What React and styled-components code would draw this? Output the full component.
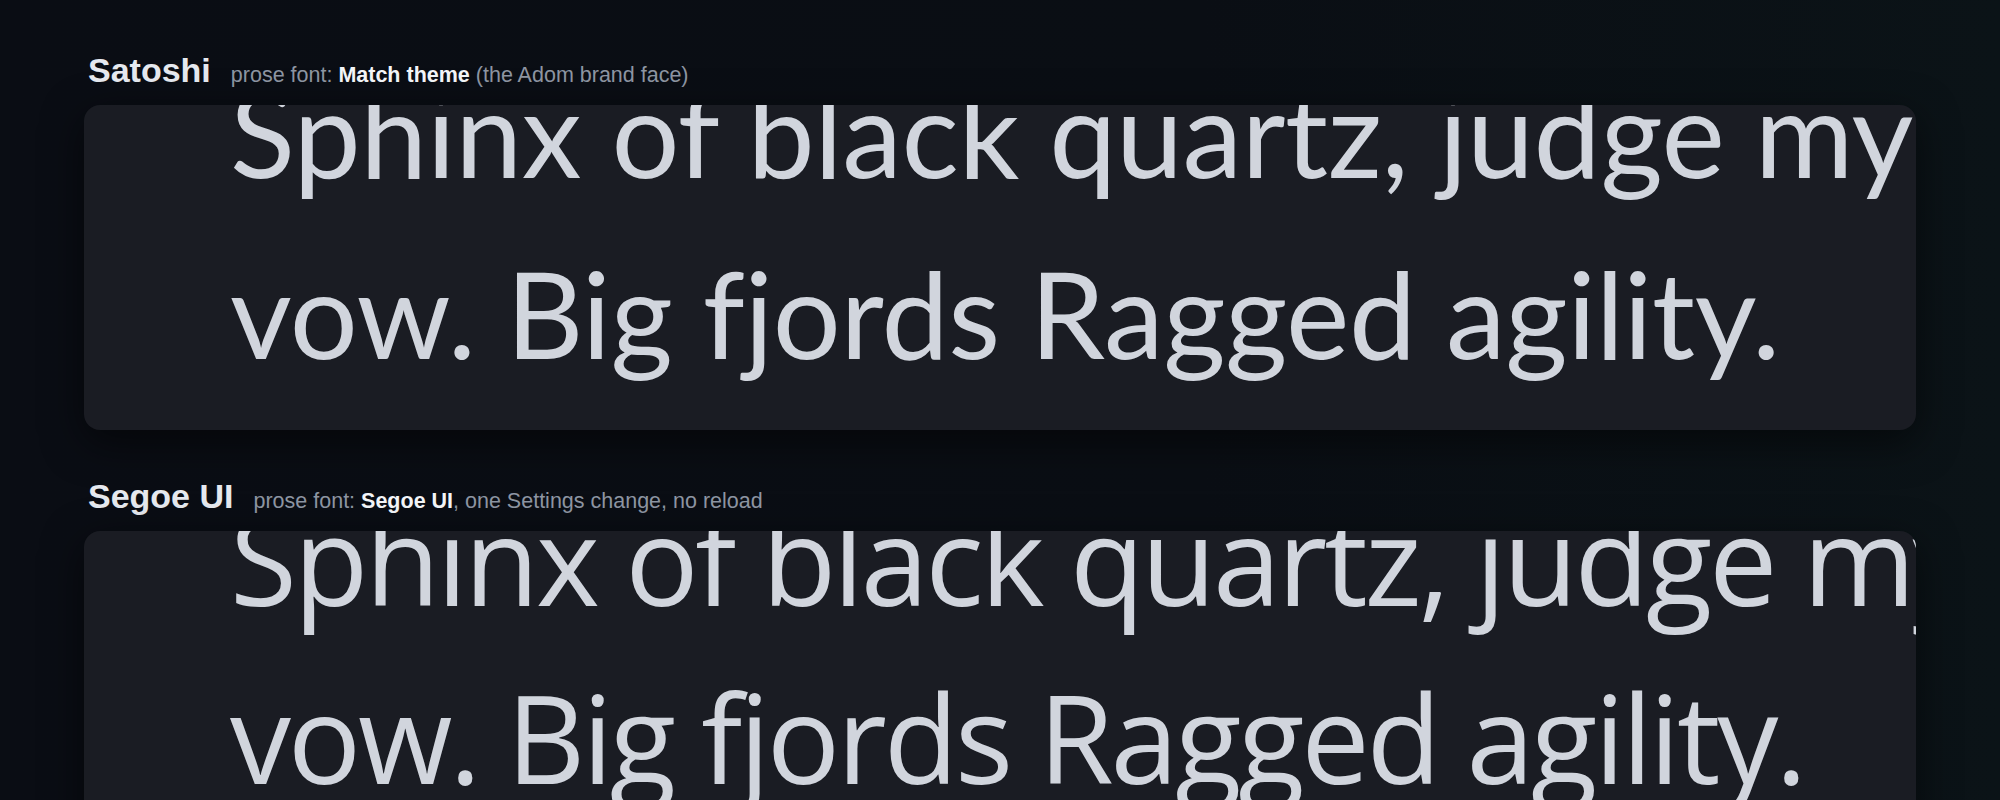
import React from 'react'
import styled, { createGlobalStyle } from 'styled-components'

const GlobalStyle = createGlobalStyle`
  html, body {
    margin: 0;
    padding: 0;
    height: 100%;
    background: #0a0d13;
  }
  body {
    font-family: "Liberation Sans", Arial, sans-serif;
    overflow: hidden;
  }
`;

const Page = styled.div`
  width: 2000px;
  height: 800px;
  overflow: hidden;
  box-sizing: border-box;
  padding: 50px 84px 0;
  background: linear-gradient(90deg, #0a0d14 0%, #0a0e14 60%, #0b1317 100%);
  display: flex;
  flex-direction: column;
  gap: 46px;
`;

const Section = styled.section`
  display: flex;
  flex-direction: column;
  gap: 14px;
`;

const Header = styled.div`
  display: flex;
  align-items: baseline;
  gap: 20px;
  padding-left: 4px;
  line-height: 1.2;
`;

const Title = styled.h2`
  margin: 0;
  font-size: 34px;
  font-weight: 700;
  color: #e6e9ef;
`;

const Note = styled.span`
  font-size: 21.5px;
  color: #8e96a3;
  b {
    color: #f4f6f9;
    font-weight: 700;
  }
`;

const Card = styled.div`
  height: ${p => p.$height}px;
  flex-shrink: 0;
  box-sizing: border-box;
  background: #1a1c23;
  border-radius: 16px;
  overflow: hidden;
  padding-left: 146px;
  box-shadow: 0 12px 40px rgba(0, 0, 0, 0.55);
`;

const Sample = styled.div`
  margin-top: ${p => p.$offset}px;
  font-family: ${p => p.$font};
  font-size: ${p => p.$size}px;
  font-weight: ${p => p.$weight};
  line-height: ${p => p.$lh}px;
  letter-spacing: ${p => p.$track}px;
  font-variant-ligatures: none;
  color: #d1d5dd;
  white-space: nowrap;
  filter: blur(0.7px);
  span {
    display: block;
  }
`;

const samples = [
  {
    title: 'Satoshi',
    note: <>prose font: <b>Match theme</b> (the Adom brand face)</>,
    font: '"Lato", sans-serif',
    weight: 400,
    size: 120,
    lh: 181,
    offset: -63,
    track: -0.4,
    height: 325,
  },
  {
    title: 'Segoe UI',
    note: <>prose font: <b>Segoe UI</b>, one Settings change, no reload</>,
    font: '"Open Sans", sans-serif',
    weight: 400,
    size: 122,
    lh: 178,
    offset: -61,
    track: -3.2,
    height: 325,
  },
]

function App() {
  return (
    <>
      <GlobalStyle />
      <Page>
        {samples.map(s => (
          <Section key={s.title}>
            <Header>
              <Title>{s.title}</Title>
              <Note>{s.note}</Note>
            </Header>
            <Card $height={s.height}>
              <Sample
                $font={s.font}
                $weight={s.weight}
                $size={s.size}
                $lh={s.lh}
                $offset={s.offset}
                $track={s.track}
              >
                <span>Sphinx of black quartz, judge my</span>
                <span>vow. Big fjords Ragged agility.</span>
              </Sample>
            </Card>
          </Section>
        ))}
      </Page>
    </>
  )
}

export default App
